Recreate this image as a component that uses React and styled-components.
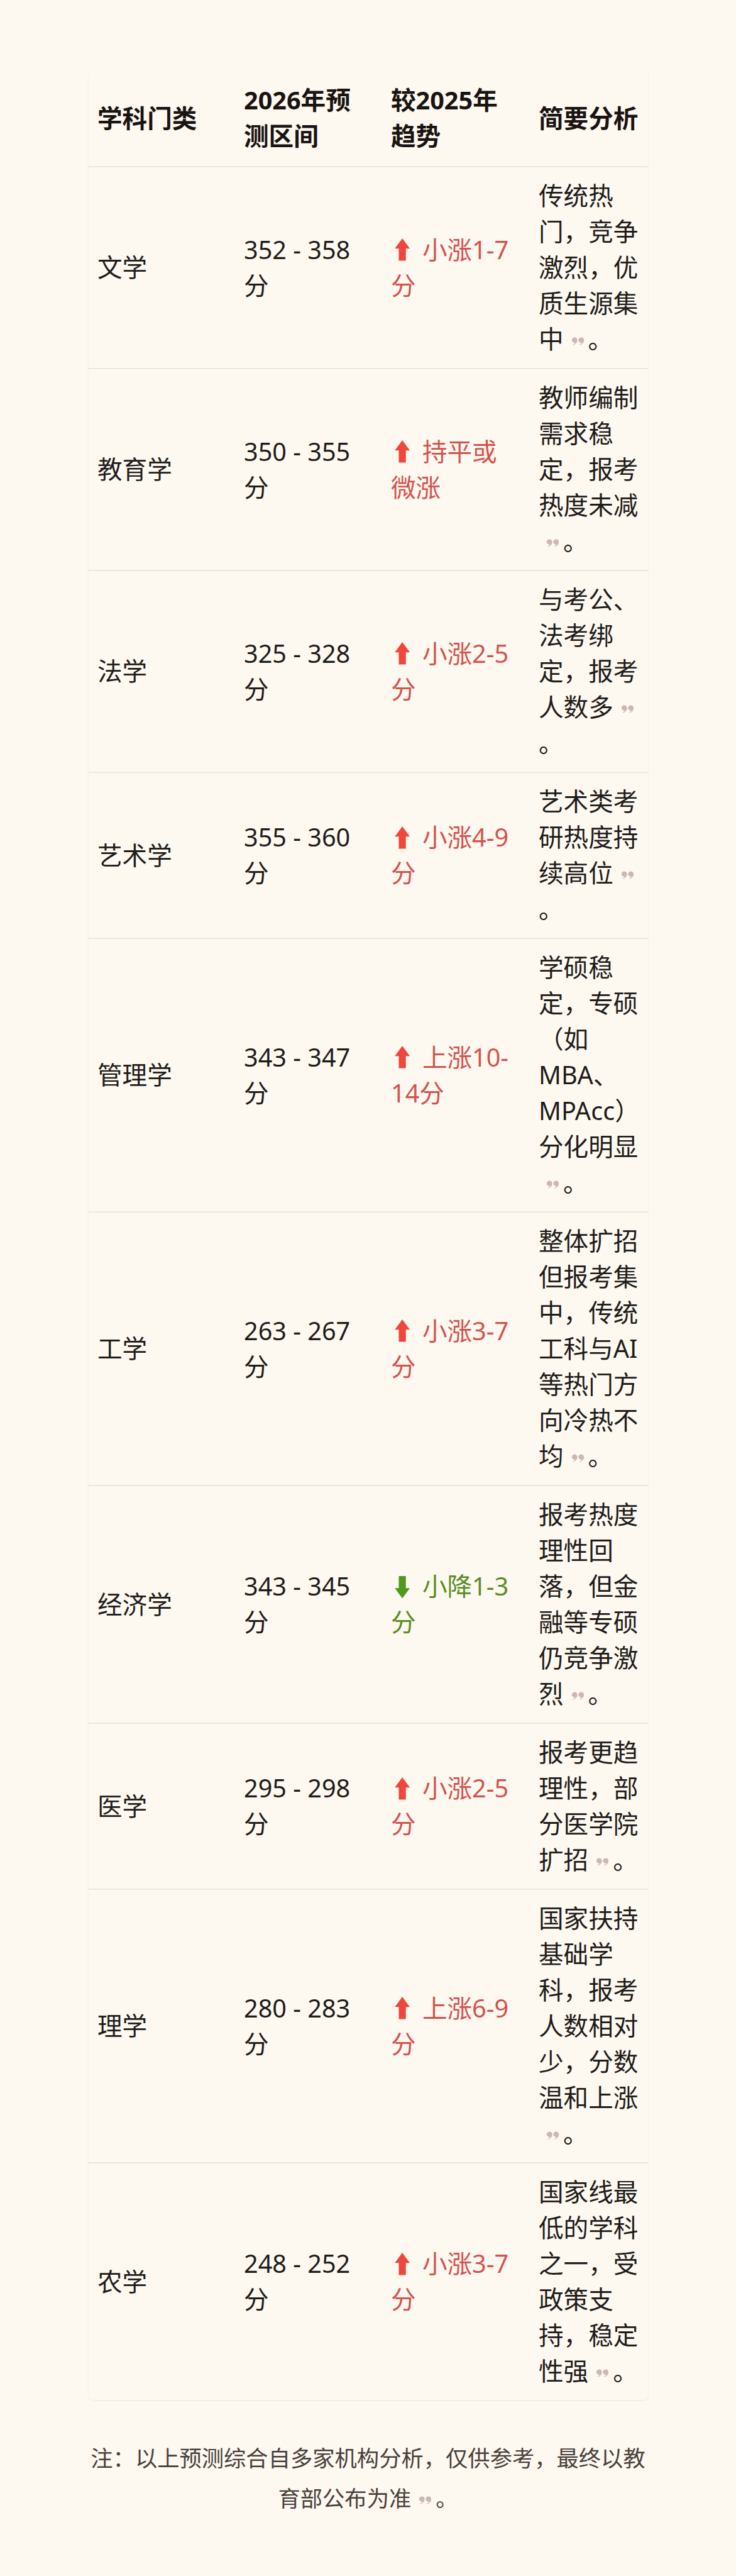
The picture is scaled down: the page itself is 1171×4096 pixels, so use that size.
import React from 'react'
import styled, { createGlobalStyle } from 'styled-components'

const GlobalStyle = createGlobalStyle`
  html,
  body {
    margin: 0;
    padding: 0;
    background: #fdf9f1;
  }
  * {
    box-sizing: border-box;
  }
`

const Page = styled.div`
  min-height: 100vh;
  background: #fdf9f1;
  padding: 112px 0 88px;
  display: flex;
  flex-direction: column;
  align-items: center;
  font-family: 'Noto Sans', 'Noto Sans CJK SC', sans-serif;
  color: #222;
`

const TableWrap = styled.div`
  width: 890px;
  border-radius: 8px;
  box-shadow: 0 1px 3px rgba(120, 90, 70, 0.12);
  overflow: hidden;
`

const Table = styled.table`
  width: 100%;
  border-collapse: collapse;
  table-layout: fixed;
  font-size: 39.6px;
  line-height: 57px;
`

const Col = styled.col`
  width: ${(p) => p.$w}px;
`

const HeadCell = styled.th`
  text-align: left;
  vertical-align: middle;
  font-weight: 700;
  color: #1a1411;
  padding: 19px ${(p) => p.$pr ?? 14.5}px 19px 14.5px;
  border-bottom: 2px solid #f1e5de;
`

const Row = styled.tr`
  &:last-child td {
    border-bottom: none;
  }
`

const Cell = styled.td`
  vertical-align: middle;
  padding: 17px ${(p) => p.$pr ?? 14.5}px 17px 14.5px;
  border-bottom: 2px solid #f1e5de;
  color: #1f1c1a;
`

const Trend = styled.span`
  color: ${(p) => (p.$dir === 'down' ? '#5b8c22' : '#d4524c')};
`

const ArrowSvg = styled.svg`
  display: inline-block;
  width: 1em;
  height: 1em;
  vertical-align: -0.16em;
`

const CiteSvg = styled.svg`
  display: inline-block;
  width: 21px;
  height: 13px;
  margin: 0 6px 0 12px;
  vertical-align: 0.12em;
`

const Note = styled.p`
  width: 890px;
  margin: 60px 0 0;
  text-align: center;
  font-size: 35.3px;
  line-height: 64px;
  color: #4a403b;
`

const Arrow = ({ dir }) => (
  <ArrowSvg viewBox="0 0 40 40" aria-hidden="true">
    {dir === 'down' ? (
      <polygon points="18.3,38 30.4,21.5 24,21.5 24,2 12.6,2 12.6,21.5 6.2,21.5" fill="#4f9a1c" />
    ) : (
      <polygon points="18.3,1 30.4,17.5 24,17.5 24,37 12.6,37 12.6,17.5 6.2,17.5" fill="#f0473c" />
    )}
  </ArrowSvg>
)

// one "9"-shaped comma of the citation mark
const comma =
  'M5 0.2C7.4 0.2 9.2 2 9.2 4.4C9.2 7.8 6.8 10.6 3 11.8L2.6 10.8C4.6 9.9 5.8 8.9 6.1 8.4C3.2 8.5 0.8 6.8 0.8 4.4C0.8 2 2.6 0.2 5 0.2Z'

const Cite = () => (
  <CiteSvg viewBox="0 0 20 12" aria-hidden="true">
    <path d={comma} fill="#ccb8b1" />
    <path d={comma} fill="#ccb8b1" transform="translate(10 0)" />
  </CiteSvg>
)

const rows = [
  { name: '文学', range: '352 - 358分', dir: 'up', trend: ['小涨1-7分'], note: '传统热门，竞争激烈，优质生源集中' },
  { name: '教育学', range: '350 - 355分', dir: 'up', trend: ['持平或微涨'], note: '教师编制需求稳定，报考热度未减' },
  { name: '法学', range: '325 - 328分', dir: 'up', trend: ['小涨2-5分'], note: '与考公、法考绑定，报考人数多' },
  { name: '艺术学', range: '355 - 360分', dir: 'up', trend: ['小涨4-9分'], note: '艺术类考研热度持续高位' },
  { name: '管理学', range: '343 - 347分', dir: 'up', trend: ['上涨10-', '14分'], note: '学硕稳定，专硕（如MBA、MPAcc）分化明显' },
  { name: '工学', range: '263 - 267分', dir: 'up', trend: ['小涨3-7分'], note: '整体扩招但报考集中，传统工科与AI等热门方向冷热不均' },
  { name: '经济学', range: '343 - 345分', dir: 'down', trend: ['小降1-3分'], note: '报考热度理性回落，但金融等专硕仍竞争激烈' },
  { name: '医学', range: '295 - 298分', dir: 'up', trend: ['小涨2-5分'], note: '报考更趋理性，部分医学院扩招' },
  { name: '理学', range: '280 - 283分', dir: 'up', trend: ['上涨6-9分'], note: '国家扶持基础学科，报考人数相对少，分数温和上涨' },
  { name: '农学', range: '248 - 252分', dir: 'up', trend: ['小涨3-7分'], note: '国家线最低的学科之一，受政策支持，稳定性强' },
]

export default function App() {
  return (
    <>
      <GlobalStyle />
      <Page lang="zh-CN">
        <TableWrap>
          <Table>
            <colgroup>
              <Col $w={233} />
              <Col $w={234} />
              <Col $w={235} />
              <Col $w={188} />
            </colgroup>
            <thead>
              <tr>
                <HeadCell>学科门类</HeadCell>
                <HeadCell $pr={24}>2026年预测区间</HeadCell>
                <HeadCell>较2025年趋势</HeadCell>
                <HeadCell $pr={0}>简要分析</HeadCell>
              </tr>
            </thead>
            <tbody>
              {rows.map((r) => (
                <Row key={r.name}>
                  <Cell>{r.name}</Cell>
                  <Cell $pr={24}>{r.range}</Cell>
                  <Cell>
                    <Trend $dir={r.dir}>
                      <Arrow dir={r.dir} />{' '}
                      {r.trend[0]}
                      {r.trend[1] && (
                        <>
                          <wbr />
                          {r.trend[1]}
                        </>
                      )}
                    </Trend>
                  </Cell>
                  <Cell $pr={0}>
                    {r.note}
                    <Cite />。
                  </Cell>
                </Row>
              ))}
            </tbody>
          </Table>
        </TableWrap>
        <Note>
          注：以上预测综合自多家机构分析，仅供参考，最终以教育部公布为准
          <Cite />。
        </Note>
      </Page>
    </>
  )
}
